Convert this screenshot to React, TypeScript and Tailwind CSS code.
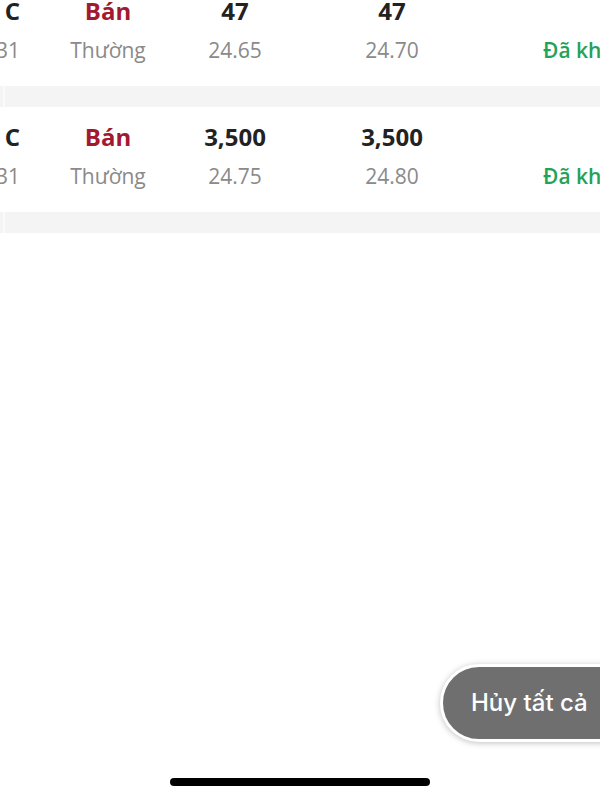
import React from "react";

const rows = [
  { a: "C", b: "31", qty1: "47", qty2: "47", p1: "24.65", p2: "24.70" },
  { a: "C", b: "31", qty1: "3,500", qty2: "3,500", p1: "24.75", p2: "24.80" },
];

export default function App() {
  return (
    <div className="relative h-[800px] w-[600px] overflow-hidden bg-white flex flex-col" style={{ fontFamily: '"Open Sans", sans-serif' }}>
      <div className="-mt-[19px] flex flex-col">
        {rows.map((r, i) => (
          <div key={i} className="flex flex-col">
            <div className="flex -ml-[100px] w-[800px] pt-[14px] pb-[21px]">
              <div className="w-[120px] flex flex-col items-end">
                <div className="h-8 leading-8 text-[24px] font-bold text-[#222]">{r.a}</div>
                <div className="h-[30px] leading-[30px] text-[21px] text-[#8a8a8a] mt-[8px]">{r.b}</div>
              </div>
              <div className="w-[176px] flex flex-col items-center">
                <div className="h-8 leading-8 text-[24px] font-bold text-[#a3192f]">Bán</div>
                <div className="h-[30px] leading-[30px] text-[21px] text-[#8a8a8a] mt-[8px]">Thường</div>
              </div>
              <div className="w-[78px] flex flex-col items-center">
                <div className="h-8 leading-8 text-[24px] font-bold text-[#222]">{r.qty1}</div>
                <div className="h-[30px] leading-[30px] text-[21px] text-[#8a8a8a] mt-[8px]">{r.p1}</div>
              </div>
              <div className="w-[236px] flex flex-col items-center">
                <div className="h-8 leading-8 text-[24px] font-bold text-[#222]">{r.qty2}</div>
                <div className="h-[30px] leading-[30px] text-[21px] text-[#8a8a8a] mt-[8px]">{r.p2}</div>
              </div>
              <div className="flex flex-col pl-[33px]">
                <div className="h-8" />
                <div className="h-[30px] leading-[30px] text-[21px] font-semibold text-[#23a259] whitespace-nowrap mt-[8px]">Đã khớp</div>
              </div>
            </div>
            <div className="h-[21px] bg-[#f4f4f4] flex">
              <div className="w-[2px] ml-[3px] bg-[#fafafa]" />
            </div>
          </div>
        ))}
      </div>
      <div className="flex-1" />
      <div className="flex justify-center pb-[14px]">
        <div className="h-[8px] w-[260px] rounded-full bg-black" />
      </div>
      <div
        className="absolute left-[440px] top-[664px] h-[78px] w-[220px] rounded-full border-[3px] border-white bg-[#6f6f6f] shadow-[0_1px_6px_rgba(0,0,0,0.25)] flex items-center pl-[28px]"
      >
        <span className="text-white text-[24px] font-medium whitespace-nowrap" style={{ fontFamily: 'Inter, sans-serif' }}>Hủy tất cả</span>
      </div>
    </div>
  );
}
